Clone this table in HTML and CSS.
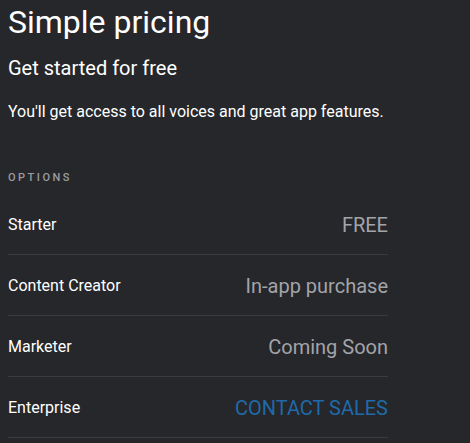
FILE: index.html
```html
<!DOCTYPE html>
<html>
<head>
<meta charset="utf-8">
<link rel="stylesheet" href="styles.css">
</head>
<body>
<main class="page">
  <h1 class="title">Simple pricing</h1>
  <h2 class="subtitle">Get started for free</h2>
  <p class="lead">You'll get access to all voices and great app features.</p>
  <div class="section-label">OPTIONS</div>
  <ul class="options">
    <li class="option"><span class="name">Starter</span><span class="value">FREE</span></li>
    <li class="option"><span class="name">Content Creator</span><span class="value">In-app purchase</span></li>
    <li class="option"><span class="name">Marketer</span><span class="value">Coming Soon</span></li>
    <li class="option"><span class="name">Enterprise</span><span class="value link">CONTACT SALES</span></li>
  </ul>
</main>
</body>
</html>
```
FILE: styles.css
```css
html, body {
  margin: 0;
  padding: 0;
  background: #26272b;
}
body {
  font-family: Roboto, "Liberation Sans", sans-serif;
  color: #ffffff;
}
.page {
  padding: 2px 8px 0 8px;
  width: 380px;
}
.title {
  margin: 0;
  font-size: 32px;
  font-weight: 400;
  line-height: 40px;
}
.subtitle {
  margin: 12px 0 0 0;
  font-size: 20px;
  font-weight: 400;
  line-height: 28px;
}
.lead {
  margin: 18px 0 0 0;
  font-size: 16px;
  line-height: 24px;
}
.section-label {
  margin-top: 46px;
  font-size: 11px;
  font-weight: 500;
  letter-spacing: 2.5px;
  color: #9b9ca0;
  line-height: 16px;
}
.options {
  list-style: none;
  margin: 8px 0 0 0;
  padding: 0;
}
.option {
  display: flex;
  justify-content: space-between;
  align-items: center;
  height: 60px;
  padding-top: 1px;
  box-sizing: border-box;
  height: 61px;
  border-bottom: 1px solid #3a3b40;
}
.name {
  font-size: 16px;
}
.value {
  font-size: 20px;
  color: #a3a4a8;
}
.value.link {
  color: #1f6aa8;
}
```
